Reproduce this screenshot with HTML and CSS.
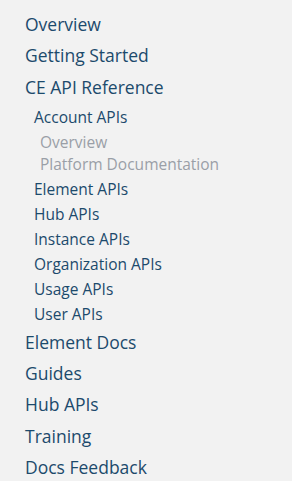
FILE: index.html
```html
<!DOCTYPE html>
<html>
    <head>
        <title>Docs navigation</title>
        <link rel="stylesheet" href="styles.css">
    </head>
    <body>
    <nav class="sidebar">
        <ul class="nav-top">
            <li><a href="#">Overview</a></li>
            <li><a href="#">Getting Started</a></li>
            <li><a href="#">CE API Reference</a>
                <ul class="nav-sub">
                    <li><a href="#">Account APIs</a>
                        <ul class="nav-leaf">
                            <li><a href="#">Overview</a></li>
                            <li><a href="#">Platform Documentation</a></li>
                        </ul>
                    </li>
                    <li><a href="#">Element APIs</a></li>
                    <li><a href="#">Hub APIs</a></li>
                    <li><a href="#">Instance APIs</a></li>
                    <li><a href="#">Organization APIs</a></li>
                    <li><a href="#">Usage APIs</a></li>
                    <li><a href="#">User APIs</a></li>
                </ul>
            </li>
            <li><a href="#">Element Docs</a></li>
            <li><a href="#">Guides</a></li>
            <li><a href="#">Hub APIs</a></li>
            <li><a href="#">Training</a></li>
            <li><a href="#">Docs Feedback</a></li>
        </ul>
    </nav>
    </body>
</html>
```

FILE: styles.css
```css
body {
    margin: 0;
    background-color: #f2f2f2;
    font-family: 'Open Sans', sans-serif;
}

.sidebar {
    padding-top: 9px;
}

ul {
    list-style: none;
    margin: 0;
    padding: 0;
}

a {
    text-decoration: none;
    color: #1c4a6c;
}

.nav-top {
    padding-left: 25px;
}

.nav-top > li > a {
    font-size: 17.5px;
    line-height: 31.25px;
    display: block;
}

.nav-sub {
    padding-left: 9px;
    padding-top: 2px;
}

.nav-sub > li > a {
    font-size: 15.5px;
    line-height: 25px;
    display: block;
}

.nav-leaf {
    padding-left: 6px;
    padding-top: 1px;
    padding-bottom: 2px;
}

.nav-leaf a {
    font-size: 15.5px;
    line-height: 22px;
    display: block;
    color: #9a9fa7;
}
```
